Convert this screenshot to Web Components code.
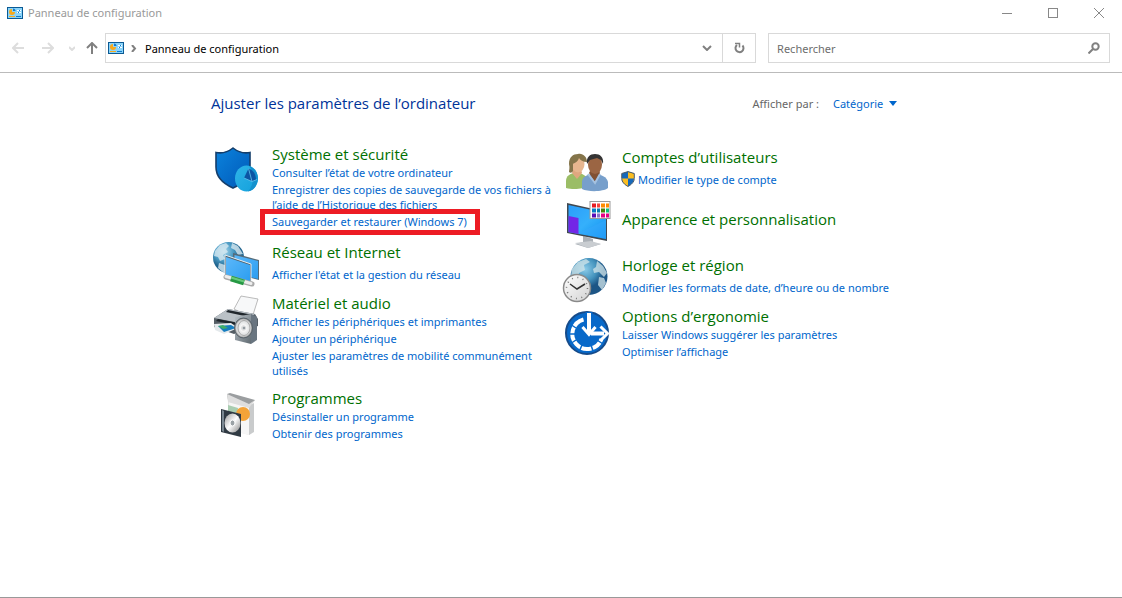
<!DOCTYPE html>
<html lang="fr">
<head>
<meta charset="utf-8">
<title>Panneau de configuration</title>
<style>
html, body { margin: 0; }
body { font: 11px/15px "Noto Sans", "Open Sans", sans-serif; background: #fff; color: #000; }
</style>
</head>
<body>
<control-panel></control-panel>

<script>
const glyph = {
  panel: `<svg width="16" height="12" viewBox="0 0 16 12"><rect width="16" height="12" fill="#0b5a94"/><rect x="1" y="1" width="14" height="10" fill="#8ad4fa"/><path d="M5 5V2A3 3 0 1 0 8 5z" fill="#f7a91c"/><path d="M6 4V1.500A2.500 2.500 0 0 1 8.500 4z" fill="#1479c9"/><path d="M10 3.500h4M10 5.500h4" stroke="#fff"/><path d="M12 3.500h1M11 5.500h1" stroke="#1479c9"/><path d="M2 9.500h6" stroke="#f7a91c"/><path d="M9 9.500h5" stroke="#1479c9"/></svg>`,
  shield: `<svg viewBox="0 0 48 52"><defs><linearGradient id="s" x2="1" y2="1"><stop stop-color="#0b83dd"/><stop offset="1" stop-color="#0058b7"/></linearGradient><linearGradient id="c" x2="1" y2="1"><stop stop-color="#2fb4e8"/><stop offset="1" stop-color="#12a0dc"/></linearGradient></defs><path d="M22 4C17 8 10 9.500 5 8.500V23c0 10 8 17 17 21 9-4 17-11 17-21V8.500C34 9.500 27 8 22 4z" fill="url(#s)" stroke="#143e6b" stroke-width="1.600"/><ellipse cx="35.500" cy="34.500" rx="11.500" ry="13" fill="url(#c)"/><path d="M38 22c5 1 8.500 6 8.900 12-.2 7-4 12.500-9.900 13.500 6-6 7-19 1-25.500z" fill="#1491cd"/><path d="M37.500 24.500L33 34l8 3.500 4-1.500C45 30 42 26 37.500 24.500z" fill="#0c55a4"/><path d="M37.500 24.500L41 37.500 33 34M41 37.500l5-2" fill="none" stroke="#62c5ef" stroke-width=".8"/></svg>`,
  network: `<svg viewBox="0 0 48 52"><defs><radialGradient id="g" cx=".35" cy=".3"><stop stop-color="#a9d8ed"/><stop offset=".6" stop-color="#4c9cc5"/><stop offset="1" stop-color="#21658f"/></radialGradient><linearGradient id="m" x2="1" y2="1"><stop stop-color="#5cb8fa"/><stop offset="1" stop-color="#2b9df0"/></linearGradient></defs><circle cx="17.500" cy="18.500" r="15.500" fill="url(#g)"/><path d="M4 12l5-6 6-2 3 3-3 3 2 3-5 3 2 4-5 2-2-4-4-1zM21 4l6 3 5 8-5 1-3-5-4-2zM8 24l6 2 2 5-3 3-6-5z" fill="#d7e9f0" opacity=".8"/><path d="M22 14l26 7v20l-26-7z" fill="#556b79"/><path d="M23.500 16L47 22v18l-23-6z" fill="url(#m)"/><path d="M14 16l26 9v20l-26-8z" fill="#53636d" stroke="#e5eef4" stroke-width="1"/><path d="M15 18l24 8v17l-24-7z" fill="url(#m)"/><path d="M15 38l26 7" stroke="#aaa" stroke-width="5" stroke-linecap="round"/><path d="M15 37.500l25 7" stroke="#eee" stroke-width="3" stroke-linecap="round"/><path d="M20 39.500l13 4" stroke="#269944" stroke-width="6"/><path d="M20 38.500l13 4" stroke="#69c97c" stroke-width="2"/></svg>`,
  printer: `<svg viewBox="0 0 48 52"><defs><linearGradient id="sp" x2="1" y2="1"><stop stop-color="#b9c2c8"/><stop offset="1" stop-color="#606a71"/></linearGradient><radialGradient id="co"><stop stop-color="#777"/><stop offset=".3" stop-color="#f8f8f8"/><stop offset=".8" stop-color="#d7d9da"/><stop offset="1" stop-color="#777"/></radialGradient></defs><path d="M23 16L30 3l17 3-6 19z" fill="#f7f8f9" stroke="#aaa" stroke-width=".8"/><path d="M3 25l14-9 27 5 3 5v7l-24 8-20-7z" fill="#555e65"/><path d="M3 25l14-9 27 5-15 9z" fill="#bac1c6"/><path d="M17 17l25 5-4 2-23-5z" fill="#20272c"/><path d="M7 26l20 4-3 2-19-4z" fill="#1d252b"/><path d="M3 31l17-1 7 5-14 6-9-4z" fill="#e4e9ec"/><path d="M7 33l13-1 5 3-12 4z" fill="#167dbf"/><path d="M7 33l5-1 5 3-5 1z" fill="#3fae68"/><path d="M24 24l16-3v30l-16-4z" fill="url(#sp)"/><path d="M40 21l6 3v23l-6 4z" fill="#697580"/><ellipse cx="32.500" cy="35" rx="9" ry="10" fill="url(#co)" stroke="#58636b"/><ellipse cx="33" cy="35" rx="6" ry="7.500" fill="none" stroke="#999" stroke-width=".8"/><circle cx="33" cy="35" r="2" fill="#939ba1" stroke="#eee"/></svg>`,
  programs: `<svg viewBox="0 0 48 52"><defs><linearGradient id="d" x2="1" y2="1"><stop stop-color="#989898"/><stop offset=".5" stop-color="#fff"/><stop offset="1" stop-color="#858585"/></linearGradient></defs><path d="M17 8l26 9v26l-5 4-21-6z" fill="#e4e4e4"/><path d="M18 14l20 5v28l-20-5z" fill="#f6f6f6"/><path d="M38 18l5-3v29l-5 3z" fill="#c9cbcc"/><path d="M16 6l3-1 25 7-5 6-22-6z" fill="#9b9ea0"/><path d="M16 6l1 8 21 6 6-8-6 4z" fill="#dedede"/><path d="M17 17l10 3-1 20-9-3z" fill="#a9cdb1"/><circle cx="32" cy="26" r="7" fill="#f3a338"/><path d="M10 21l20 5v23l-20-5z" fill="#303a43"/><path d="M11 22l2 1v21l-2-1z" fill="#7a8791"/><ellipse cx="21.500" cy="35" rx="8" ry="9.500" fill="url(#d)"/><ellipse cx="21.500" cy="35" rx="2.500" ry="3" fill="#9ba2a6" stroke="#fff"/></svg>`,
  users: `<svg viewBox="0 0 48 52"><path d="M5 44v-7c0-5 4-8 10-8 7 0 11 3 12 8v5c-4 3-15 4-22 2z" fill="#9bbd66"/><path d="M11 29l5 6 5-6-1-4h-8z" fill="#e0a77f"/><ellipse cx="17" cy="20" rx="6.500" ry="8.500" fill="#e7b68f"/><path d="M8 28c0-2 1-4 0-8 0-7 4-10 9-10 5-1 9 3 9 8-4 0-7-2-8-4-1 4-5 5-6 6v7c-1 2-3 2-4 1z" fill="#84744a"/><path d="M21 45v-7c0-5 5-8 12-8s13 3 14 8v6c-5 4-20 4-26 1z" fill="#779fcb"/><path d="M28 29l6 9 5-9-2-4h-7z" fill="#815133"/><ellipse cx="34" cy="20.500" rx="7" ry="9.500" fill="#9b6543"/><path d="M26 20c-1-7 3-10 8-10s9 3 8 10l-2-4-4-2-7 2z" fill="#343333"/><path d="M27 30l7 9 5-9" fill="none" stroke="#a5c1df" stroke-width="2"/></svg>`,
  display: `<svg viewBox="0 0 48 52"><defs><linearGradient id="a" x2="1" y2="1"><stop stop-color="#2b9dfb"/><stop offset=".5" stop-color="#35b0fb"/><stop offset="1" stop-color="#0a8ef0"/></linearGradient></defs><path d="M22 38l10 3v4l8 1-13 4-13-4 8-2z" fill="#aab0b6"/><path d="M14 45l16-2 10 3-13 4z" fill="#c9cdd1"/><path d="M6 5l40 9v29L6 35z" fill="#41484f"/><path d="M7.500 7L45 15v26L7.500 34z" fill="url(#a)"/><path d="M7.500 18l10 2v16l-10-2z" fill="#7326e6"/><path d="M17.500 35L45 22v19z" fill="#35a8fb" opacity=".5"/><rect x="29" y="3.500" width="20" height="17" fill="#fff" stroke="#999"/><g><path d="M31 5.500h4v4h-4z" fill="#e51c23"/><path d="M36 5.500h3v4h-3z" fill="#f4433d"/><path d="M40 5.500h4v4h-4zM45 5.500h3v4h-3z" fill="#ff8b00"/><path d="M31 10.500h4v4h-4z" fill="#087cc5"/><path d="M36 10.500h3v4h-3z" fill="#087cae"/><path d="M40 10.500h4v4h-4z" fill="#47820c"/><path d="M45 10.500h3v4h-3z" fill="#0cc079"/><path d="M31 15.500h4v4h-4z" fill="#5a0cb4"/><path d="M36 15.500h3v4h-3z" fill="#8d72c8"/><path d="M40 15.500h4v4h-4zM45 15.500h3v4h-3z" fill="#e50083"/></g></svg>`,
  clock: `<svg viewBox="0 0 48 52"><defs><radialGradient id="w" cx=".4" cy=".3"><stop stop-color="#8bcbe8"/><stop offset=".6" stop-color="#4594be"/><stop offset="1" stop-color="#1d5585"/></radialGradient><linearGradient id="f" x2="1" y2="1"><stop stop-color="#fff"/><stop offset="1" stop-color="#d2d2d2"/></linearGradient></defs><circle cx="28" cy="24.500" r="18.500" fill="url(#w)"/><path d="M11 17l6-7 8-3 4 3-6 3 1 5-6 3-2 6-6-2zM36 9l6 5 4 7-3 4-5-5-5 1-1-4 3-2zM38 25l5 1 2 5-4 7-4-5z" fill="#d3e6ea" opacity=".75"/><circle cx="16" cy="36" r="13.500" fill="url(#f)" stroke="#8a8a8a" stroke-width="1.500"/><circle cx="16" cy="36" r="10.500" fill="none" stroke="#777" stroke-dasharray="1 4.500" stroke-width="1.500"/><path d="M9 32l7 5 8-5" fill="none" stroke="#333" stroke-width="1.500"/></svg>`,
  ease: `<svg viewBox="0 0 48 52"><circle cx="26" cy="27" r="21" fill="#0869c9" stroke="#164b8a" stroke-width="2"/><path d="M22.500 13.500A15 15 0 1 0 40.500 33" fill="none" stroke="#fff" stroke-width="4"/><path d="M9 18l6 4M7 28h7M9 38l6-4M18 46l3-7M32 45l-2-6M42 38l-6-4" stroke="#0869c9" stroke-width="1.500"/><path d="M28 6v22h17" fill="none" stroke="#0869c9" stroke-width="7"/><path d="M28 7v19M30 27.500h13" stroke="#fff" stroke-width="4"/><path d="M21.500 21l6.500 7.500 6.500-7.500M39.500 20.500l7 7-7 7" fill="none" stroke="#fff" stroke-width="3"/></svg>`,
  uac: `<svg class="uac" width="14" height="16" viewBox="0 0 14 16"><path d="M7 .6L1 2.500v5C1 11 4 14 7 15.400 10 14 13 11 13 7.500v-5z" fill="#1769ba"/><path d="M7 1l6 1.500v5H7zM1 7.500h6v7.900C4 14 1 11 1 7.500z" fill="#fbbd22"/><path d="M7 .6L.7 2.500v5C.7 11 4 14 7 15.400c3-1.400 6.300-4.400 6.300-7.900v-5z" fill="none" stroke="#4b5a68"/></svg>`
};

function shadow(host, html) {
  const template = document.createElement('template');
  template.innerHTML = html;
  host.attachShadow({ mode: 'open' }).append(template.content.cloneNode(true));
}

customElements.define('panel-glyph', class extends HTMLElement {
  connectedCallback() {
    shadow(this, `<style>:host { display: block; flex: none; } svg { display: block; overflow: visible; }</style>${glyph[this.getAttribute('name')]}`);
  }
});

customElements.define('title-bar', class extends HTMLElement {
  connectedCallback() {
    shadow(this, `<style>
      :host { display: flex; align-items: center; height: 25px; padding-left: 7px; gap: 5px; color: #999; }
      span { flex: 1; }
      div { display: flex; }
      button { display: grid; place-items: center; width: 46px; height: 24px; padding: 0; border: 0; background: none; }
      svg { fill: none; stroke: #888; shape-rendering: crispEdges; }
      .close { shape-rendering: auto; }
    </style>
    <panel-glyph name="panel"></panel-glyph><span><slot></slot></span>
    <div>
      <button aria-label="Réduire"><svg width="10" height="10"><path d="M0 5.500h10"/></svg></button>
      <button aria-label="Agrandir"><svg width="10" height="10"><path d="M.5.500h9v9h-9z"/></svg></button>
      <button aria-label="Fermer"><svg class="close" width="10" height="10"><path d="M0 0l10 10M10 0L0 10"/></svg></button>
    </div>`);
  }
});

customElements.define('nav-bar', class extends HTMLElement {
  connectedCallback() {
    shadow(this, `<style>
      :host { display: flex; align-items: center; padding: 8px 12px 9px 0; border-bottom: 1px solid #bbb; }
      nav { display: flex; flex: none; align-items: center; width: 105px; height: 30px; }
      button { display: grid; place-items: center; width: 30px; height: 28px; padding: 0; border: 0; background: none; flex: none; }
      nav button:first-child { margin-left: 3px; }
      nav button:nth-child(3) { width: 17px; }
      nav button:nth-child(4) { width: 24px; }
      svg { display: block; fill: none; stroke: #808080; stroke-width: 2; }
      .off { stroke: #ddd; }
      .address, form { display: flex; align-items: center; box-sizing: border-box; height: 30px; border: 1px solid #d9d9d9; min-width: 0; }
      .address { flex: 651 1 0; margin-right: 12px; padding-left: 2px; }
      .path { flex: 1; }
      .chev { margin: 0 8px 0 7px; }
      .address button:last-child { width: 33px; border-left: 1px solid #d9d9d9; }
      form { flex: 342 1 0; margin: 0; }
      input { flex: 1; min-width: 0; border: 0; padding: 0 8px; background: none; font: inherit; outline: 0; }
      input::placeholder { color: #6d6d6d; opacity: 1; }
    </style>
    <nav aria-label="Historique">
      <button aria-label="Précédent"><svg class="off" width="12" height="12"><path d="M12 6H1M6 1L1 6l5 5"/></svg></button>
      <button aria-label="Suivant"><svg class="off" width="12" height="12"><path d="M0 6h11M6 1l5 5-5 5"/></svg></button>
      <button aria-label="Emplacements récents"><svg class="off" width="6" height="5"><path d="M0 1l3 3 3-3"/></svg></button>
      <button aria-label="Haut"><svg width="12" height="12"><path d="M6 12V1M1 6l5-5 5 5"/></svg></button>
    </nav>
    <div class="address">
      <panel-glyph name="panel"></panel-glyph>
      <svg class="chev" width="6" height="7"><path d="M1 0l3 3.500L1 7"/></svg>
      <span class="path"><slot></slot></span>
      <button aria-label="Emplacements précédents"><svg width="10" height="6"><path d="M1 1l4 4 4-4"/></svg></button>
      <button aria-label="Actualiser"><svg width="12" height="12"><path d="M9.500 3.500a4 4 0 1 1-5.500-.5"/><path d="M2 1.500h4.500v4" stroke-width="1.500"/></svg></button>
    </div>
    <form role="search">
      <input type="search" placeholder="Rechercher" aria-label="Rechercher">
      <button type="button" aria-label="Lancer la recherche"><svg width="12" height="12"><circle cx="7.500" cy="4.500" r="3.200"/><path d="M5 7l-4.500 4.500"/></svg></button>
    </form>`);
  }
});

customElements.define('view-picker', class extends HTMLElement {
  connectedCallback() {
    shadow(this, `<style>
      :host { display: flex; align-items: center; color: #666; }
      label { margin-right: 14px; }
      select { appearance: none; border: 0; padding: 0; margin: 0 5px 0 0; background: none; font: inherit; color: #0066cc; }
    </style>
    <label for="view">Afficher par :</label>
    <select id="view"><option>Catégorie</option></select>
    <svg width="8" height="5"><path d="M0 0h8L4 5z" fill="#0066cc"/></svg>`);
  }
});

customElements.define('category-item', class extends HTMLElement {
  connectedCallback() {
    shadow(this, `<style>
      :host { display: flex; gap: 13px; min-height: 44px; }
      panel-glyph { width: 48px; height: 44px; }
      .text { flex: 1; min-width: 0; display: flex; flex-direction: column; gap: 2px; }
      h2 { margin: 0 0 -1px; font: 400 15px/20px "Open Sans", "Noto Sans", sans-serif; color: #007000; }
      :host([single]) .text { padding-top: 3px; gap: 6px; }
      :host([bare]) .text { justify-content: center; padding-bottom: 3px; }
    </style>
    <panel-glyph name="${this.getAttribute('icon')}"></panel-glyph>
    <div class="text"><h2>${this.getAttribute('heading')}</h2><slot></slot></div>`);
  }
});

customElements.define('task-link', class extends HTMLElement {
  connectedCallback() {
    shadow(this, `<style>
      :host { display: flex; gap: 3px; align-items: center; }
      a { color: #0066cc; text-decoration: none; }
      panel-glyph { margin: -1px 0 0 -1px; height: 16px; }
      :host([shield]) { height: 15px; }
      :host([marked]) { position: relative; align-self: flex-start; align-items: flex-start; height: 16px; margin: 0 -7px -1px; padding: 0 8px 0 7px; outline: 5px solid #ed1c24; }
    </style>
    ${this.hasAttribute('shield') ? '<panel-glyph name="uac"></panel-glyph>' : ''}<a href="#"><slot></slot></a>`);
  }
});

customElements.define('control-panel', class extends HTMLElement {
  connectedCallback() {
    shadow(this, `<style>
      :host { display: flex; flex-direction: column; box-sizing: border-box; min-height: 100vh; border-bottom: 1px solid #999; }
      main { box-sizing: border-box; width: 100%; max-width: 700px; margin: 0 auto; padding-top: 20px; }
      header { display: flex; align-items: center; justify-content: space-between; padding-right: 14px; }
      h1 { margin: 0; font: 400 15px/20px "Open Sans", "Noto Sans", sans-serif; color: #003399; }
      .columns { display: grid; grid-template-columns: 1fr 1fr; margin-top: 31px; }
      section { display: flex; flex-direction: column; gap: 10px; }
    </style>
    <title-bar>Panneau de configuration</title-bar>
    <nav-bar>Panneau de configuration</nav-bar>
    <main>
      <header><h1>Ajuster les paramètres de l’ordinateur</h1><view-picker></view-picker></header>
      <div class="columns">
        <section>
          <category-item icon="shield" heading="Système et sécurité">
            <task-link>Consulter l’état de votre ordinateur</task-link>
            <task-link>Enregistrer des copies de sauvegarde de vos fichiers à l’aide de l’Historique des fichiers</task-link>
            <task-link marked>Sauvegarder et restaurer (Windows 7)</task-link>
          </category-item>
          <category-item icon="network" heading="Réseau et Internet" single>
            <task-link>Afficher l'état et la gestion du réseau</task-link>
          </category-item>
          <category-item icon="printer" heading="Matériel et audio">
            <task-link>Afficher les périphériques et imprimantes</task-link>
            <task-link>Ajouter un périphérique</task-link>
            <task-link>Ajuster les paramètres de mobilité communément utilisés</task-link>
          </category-item>
          <category-item icon="programs" heading="Programmes">
            <task-link>Désinstaller un programme</task-link>
            <task-link>Obtenir des programmes</task-link>
          </category-item>
        </section>
        <section>
          <category-item icon="users" heading="Comptes d’utilisateurs" single>
            <task-link shield>Modifier le type de compte</task-link>
          </category-item>
          <category-item icon="display" heading="Apparence et personnalisation" bare></category-item>
          <category-item icon="clock" heading="Horloge et région" single>
            <task-link>Modifier les formats de date, d’heure ou de nombre</task-link>
          </category-item>
          <category-item icon="ease" heading="Options d’ergonomie">
            <task-link>Laisser Windows suggérer les paramètres</task-link>
            <task-link>Optimiser l’affichage</task-link>
          </category-item>
        </section>
      </div>
    </main>`);
  }
});
</script>
</body>
</html>
